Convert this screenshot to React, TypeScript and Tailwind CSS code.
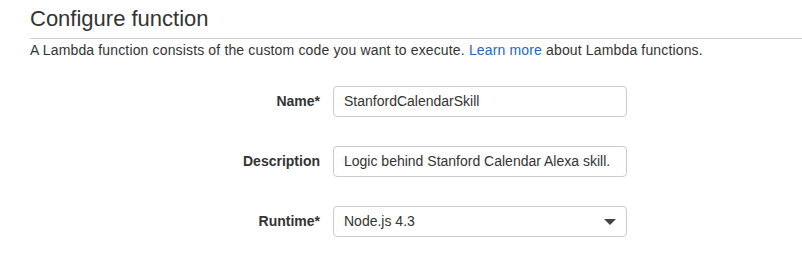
import React from "react";

function Field({ label, children }: { label: string; children: React.ReactNode }) {
  return (
    <div className="flex items-center">
      <div className="w-[320px] shrink-0 text-right text-[14px] font-bold text-[#333]">{label}</div>
      <div className="ml-[13px] w-[294px]">{children}</div>
    </div>
  );
}

export default function App() {
  return (
    <div className="w-[802px] h-[253px] bg-white overflow-hidden" style={{ fontFamily: '"Liberation Sans", Arial, sans-serif' }}>
      <div className="pl-[30px]">
        <h1 className="pt-[5px] text-[22px] leading-[28px] text-[#333] font-normal">Configure function</h1>
        <div className="mt-[5px] border-t border-[#cccccc]" />
        <p className="mt-[2px] text-[14px] leading-[18px] tracking-[0.15px] text-[#333] whitespace-nowrap">
          A Lambda function consists of the custom code you want to execute.{" "}
          <a className="text-[#2368c4]">Learn more</a> about Lambda functions.
        </p>
      </div>
      <div className="mt-[27px] flex flex-col gap-[29px]">
        <Field label="Name*">
          <div className="h-[31px] rounded-[4px] border border-[#cccccc] px-[10px] flex items-center text-[14px] text-[#333]">
            StanfordCalendarSkill
          </div>
        </Field>
        <Field label="Description">
          <div className="h-[31px] rounded-[4px] border border-[#cccccc] px-[10px] flex items-center text-[14px] text-[#333] whitespace-nowrap overflow-hidden">
            Logic behind Stanford Calendar Alexa skill.
          </div>
        </Field>
        <Field label="Runtime*">
          <div className="h-[31px] rounded-[4px] border border-[#cccccc] pl-[10px] pr-[10px] flex items-center justify-between text-[14px] text-[#333]">
            <span>Node.js 4.3</span>
            <svg width="12" height="6" viewBox="0 0 12 6"><path d="M0 0 H12 L6 6 Z" fill="#444" /></svg>
          </div>
        </Field>
      </div>
    </div>
  );
}
